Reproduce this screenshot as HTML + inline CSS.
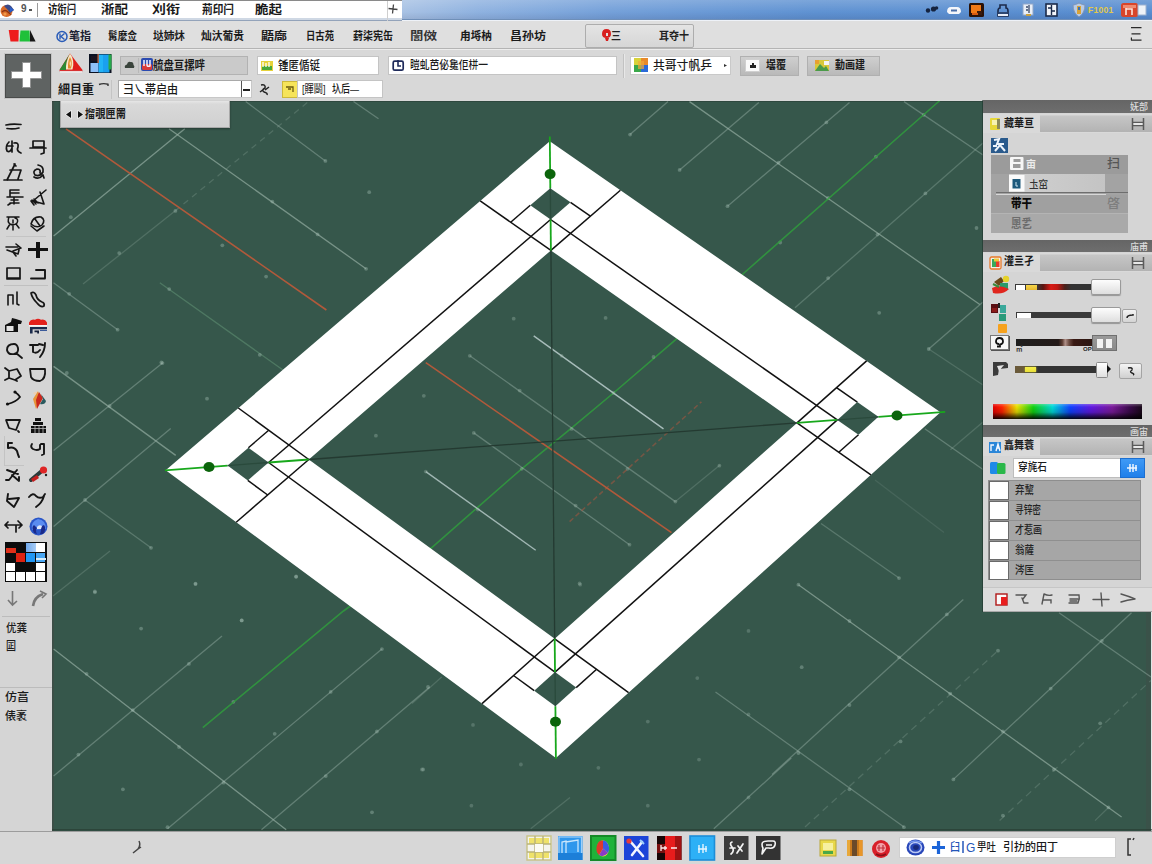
<!DOCTYPE html><html><head><meta charset="utf-8"><title>CAD</title><style>
html,body{margin:0;padding:0}body{width:1152px;height:864px;position:relative;overflow:hidden;background:#d6d6d6;font-family:"Liberation Sans","Noto Sans CJK SC",sans-serif}
div,span{position:absolute;box-sizing:border-box;white-space:nowrap}svg{position:absolute;overflow:visible}
</style></head><body>
<svg width="1152" height="864" viewBox="0 0 1152 864" style="position:absolute;left:0;top:0">
<rect x="52" y="100" width="1100" height="731" fill="#36574b"/>
<rect x="52" y="100" width="2" height="731" fill="#3c4f47"/>
<rect x="52" y="100" width="1100" height="1.6" fill="#27382f" fill-opacity=".75"/>
<rect x="1146" y="611" width="5" height="220" fill="#3e4f48" fill-opacity=".55"/>
<rect x="1151" y="611" width="1" height="220" fill="#dfe8e5"/>
<rect x="52" y="829" width="1100" height="1.5" fill="#27382f" fill-opacity=".6"/>
<line x1="53.6" y1="236" x2="184.8" y2="128.7" stroke="#9fb8ad" stroke-opacity="0.62" stroke-width="1.3"/>
<line x1="83" y1="284" x2="175" y2="211" stroke="#9fb8ad" stroke-opacity="0.25" stroke-width="1.3"/>
<line x1="175" y1="211" x2="308" y2="102" stroke="#9fb8ad" stroke-opacity="0.25" stroke-width="1.3" stroke-dasharray="6 5"/>
<line x1="169" y1="128.7" x2="366" y2="268.7" stroke="#9fb8ad" stroke-opacity="0.62" stroke-width="1.3"/>
<line x1="245.7" y1="101.5" x2="325.4" y2="161" stroke="#9fb8ad" stroke-opacity="0.42" stroke-width="1.3"/>
<line x1="353.5" y1="101.5" x2="378.5" y2="118.7" stroke="#9fb8ad" stroke-opacity="0.42" stroke-width="1.3"/>
<line x1="53.5" y1="282.8" x2="117.6" y2="329.7" stroke="#9fb8ad" stroke-opacity="0.42" stroke-width="1.3"/>
<line x1="159.8" y1="282.8" x2="283" y2="370" stroke="#6fa882" stroke-opacity="0.42" stroke-width="1.3"/>
<line x1="60" y1="170" x2="120" y2="253" stroke="#9fb8ad" stroke-opacity="0" stroke-width="1.3"/>
<line x1="689.5" y1="101.6" x2="979.8" y2="304.5" stroke="#9fb8ad" stroke-opacity="0.62" stroke-width="1.3"/>
<line x1="904" y1="101.6" x2="983" y2="155" stroke="#9fb8ad" stroke-opacity="0.42" stroke-width="1.3"/>
<line x1="928.7" y1="349" x2="983" y2="385" stroke="#9fb8ad" stroke-opacity="0.25" stroke-width="1.3"/>
<line x1="630" y1="134.6" x2="668" y2="101.6" stroke="#9fb8ad" stroke-opacity="0.42" stroke-width="1.3"/>
<line x1="679.6" y1="170" x2="758.8" y2="102.6" stroke="#9fb8ad" stroke-opacity="0.42" stroke-width="1.3"/>
<line x1="727.5" y1="206.2" x2="849.5" y2="102.6" stroke="#9fb8ad" stroke-opacity="0.42" stroke-width="1.3"/>
<line x1="795" y1="307.8" x2="983" y2="143" stroke="#9fb8ad" stroke-opacity="0.33" stroke-width="1.3"/>
<line x1="928.7" y1="349" x2="983" y2="302" stroke="#9fb8ad" stroke-opacity="0.42" stroke-width="1.3"/>
<line x1="53.6" y1="366.4" x2="175.7" y2="455.4" stroke="#9fb8ad" stroke-opacity="0.62" stroke-width="1.3"/>
<line x1="85" y1="500" x2="151" y2="547.8" stroke="#9fb8ad" stroke-opacity="0.35" stroke-width="1.3"/>
<line x1="53.6" y1="450.5" x2="162.5" y2="363" stroke="#9fb8ad" stroke-opacity="0.42" stroke-width="1.3"/>
<line x1="53.6" y1="526.4" x2="170.7" y2="428.4" stroke="#9fb8ad" stroke-opacity="0.42" stroke-width="1.3"/>
<line x1="53.6" y1="649" x2="286.2" y2="829.8" stroke="#9fb8ad" stroke-opacity="0.62" stroke-width="1.3"/>
<line x1="53.6" y1="776" x2="222" y2="635.9" stroke="#9fb8ad" stroke-opacity="0.42" stroke-width="1.3"/>
<line x1="167.5" y1="828.8" x2="381.9" y2="649" stroke="#9fb8ad" stroke-opacity="0.42" stroke-width="1.3"/>
<line x1="261.5" y1="829.8" x2="429.7" y2="687" stroke="#9fb8ad" stroke-opacity="0.42" stroke-width="1.3"/>
<line x1="53" y1="596" x2="110" y2="551" stroke="#9fb8ad" stroke-opacity="0.25" stroke-width="1.3"/>
<line x1="200" y1="700" x2="300" y2="625" stroke="#9fb8ad" stroke-opacity="0" stroke-width="1.3"/>
<line x1="715.5" y1="692" x2="904" y2="827" stroke="#9fb8ad" stroke-opacity="0.42" stroke-width="1.3"/>
<line x1="713.8" y1="828.8" x2="791.3" y2="758" stroke="#9fb8ad" stroke-opacity="0.42" stroke-width="1.3"/>
<line x1="530.7" y1="828.8" x2="570" y2="797.5" stroke="#9fb8ad" stroke-opacity="0.25" stroke-width="1.3"/>
<line x1="412" y1="703.5" x2="441.7" y2="677" stroke="#9fb8ad" stroke-opacity="0.25" stroke-width="1.3"/>
<line x1="798.4" y1="584.7" x2="1121.6" y2="817" stroke="#9fb8ad" stroke-opacity="0.62" stroke-width="1.3"/>
<line x1="821" y1="523.5" x2="899" y2="578" stroke="#9fb8ad" stroke-opacity="0.35" stroke-width="1.3"/>
<line x1="924.8" y1="428.7" x2="983" y2="469.5" stroke="#9fb8ad" stroke-opacity="0.42" stroke-width="1.3"/>
<line x1="950.4" y1="449.8" x2="983" y2="422" stroke="#9fb8ad" stroke-opacity="0.25" stroke-width="1.3"/>
<line x1="875" y1="480" x2="944" y2="532.5" stroke="#9fb8ad" stroke-opacity="0.15" stroke-width="1.3"/>
<line x1="1059" y1="612.8" x2="1151" y2="677" stroke="#9fb8ad" stroke-opacity="0.42" stroke-width="1.3"/>
<line x1="772" y1="774.4" x2="963.3" y2="599.6" stroke="#9fb8ad" stroke-opacity="0.42" stroke-width="1.3"/>
<line x1="805" y1="827" x2="998" y2="650.7" stroke="#9fb8ad" stroke-opacity="0.25" stroke-width="1.3" stroke-dasharray="7 5"/>
<line x1="953.4" y1="779.4" x2="1131.5" y2="612.8" stroke="#9fb8ad" stroke-opacity="0.42" stroke-width="1.3"/>
<line x1="999.6" y1="820.6" x2="1151" y2="680.4" stroke="#9fb8ad" stroke-opacity="0.25" stroke-width="1.3" stroke-dasharray="7 5"/>
<line x1="1095" y1="820.6" x2="1109" y2="807" stroke="#9fb8ad" stroke-opacity="0.25" stroke-width="1.3"/>
<line x1="791.3" y1="744.7" x2="960" y2="864" stroke="#9fb8ad" stroke-opacity="0" stroke-width="1.3"/>
<line x1="975" y1="380" x2="1152" y2="505" stroke="#9fb8ad" stroke-opacity="0" stroke-width="1.3"/>
<circle cx="325.4" cy="160.9" r="1.9" fill="#a9c2b7" fill-opacity="0.38"/>
<circle cx="272.3" cy="201.6" r="1.9" fill="#a9c2b7" fill-opacity="0.38"/>
<circle cx="317.6" cy="234.4" r="1.9" fill="#a9c2b7" fill-opacity="0.38"/>
<circle cx="366.1" cy="268.8" r="1.9" fill="#a9c2b7" fill-opacity="0.38"/>
<circle cx="175.4" cy="210.9" r="1.9" fill="#a9c2b7" fill-opacity="0.38"/>
<circle cx="222.3" cy="245.3" r="1.9" fill="#a9c2b7" fill-opacity="0.38"/>
<circle cx="266.1" cy="276.6" r="1.9" fill="#a9c2b7" fill-opacity="0.38"/>
<circle cx="119.2" cy="253.1" r="1.9" fill="#a9c2b7" fill-opacity="0.38"/>
<circle cx="169.2" cy="289.1" r="1.9" fill="#a9c2b7" fill-opacity="0.38"/>
<circle cx="69.2" cy="293.8" r="1.9" fill="#a9c2b7" fill-opacity="0.38"/>
<circle cx="117.6" cy="329.7" r="1.9" fill="#a9c2b7" fill-opacity="0.38"/>
<circle cx="70.8" cy="217.2" r="1.9" fill="#a9c2b7" fill-opacity="0.38"/>
<circle cx="161.4" cy="362.5" r="1.9" fill="#a9c2b7" fill-opacity="0.38"/>
<circle cx="369.2" cy="192.2" r="1.9" fill="#a9c2b7" fill-opacity="0.38"/>
<circle cx="630.1" cy="134.6" r="1.9" fill="#a9c2b7" fill-opacity="0.38"/>
<circle cx="679.6" cy="169.9" r="1.9" fill="#a9c2b7" fill-opacity="0.38"/>
<circle cx="727.5" cy="206.2" r="1.9" fill="#a9c2b7" fill-opacity="0.38"/>
<circle cx="778.6" cy="162.7" r="1.9" fill="#a9c2b7" fill-opacity="0.38"/>
<circle cx="828.1" cy="198.0" r="1.9" fill="#a9c2b7" fill-opacity="0.38"/>
<circle cx="877.5" cy="234.6" r="1.9" fill="#a9c2b7" fill-opacity="0.38"/>
<circle cx="826.4" cy="122.4" r="1.9" fill="#a9c2b7" fill-opacity="0.38"/>
<circle cx="875.9" cy="156.7" r="1.9" fill="#a9c2b7" fill-opacity="0.38"/>
<circle cx="923.7" cy="114.8" r="1.9" fill="#a9c2b7" fill-opacity="0.38"/>
<circle cx="925.4" cy="193.4" r="1.9" fill="#a9c2b7" fill-opacity="0.38"/>
<circle cx="828.1" cy="278.1" r="1.9" fill="#a9c2b7" fill-opacity="0.38"/>
<circle cx="780.2" cy="242.5" r="1.9" fill="#a9c2b7" fill-opacity="0.38"/>
<circle cx="879.2" cy="312.8" r="1.9" fill="#a9c2b7" fill-opacity="0.38"/>
<circle cx="928.7" cy="349.0" r="1.9" fill="#a9c2b7" fill-opacity="0.38"/>
<circle cx="976.5" cy="228.0" r="1.9" fill="#a9c2b7" fill-opacity="0.38"/>
<circle cx="162.5" cy="363.1" r="1.9" fill="#a9c2b7" fill-opacity="0.38"/>
<circle cx="109.7" cy="406.0" r="1.9" fill="#a9c2b7" fill-opacity="0.38"/>
<circle cx="66.8" cy="373.0" r="1.9" fill="#a9c2b7" fill-opacity="0.38"/>
<circle cx="85.0" cy="500.0" r="1.9" fill="#a9c2b7" fill-opacity="0.38"/>
<circle cx="151.0" cy="547.8" r="1.9" fill="#a9c2b7" fill-opacity="0.38"/>
<circle cx="94.9" cy="592.3" r="1.9" fill="#a9c2b7" fill-opacity="0.38"/>
<circle cx="195.5" cy="584.1" r="1.9" fill="#a9c2b7" fill-opacity="0.38"/>
<circle cx="241.7" cy="620.4" r="1.9" fill="#a9c2b7" fill-opacity="0.38"/>
<circle cx="296.1" cy="576.8" r="1.9" fill="#a9c2b7" fill-opacity="0.38"/>
<circle cx="259.8" cy="354.8" r="1.9" fill="#a9c2b7" fill-opacity="0.38"/>
<circle cx="207.0" cy="398.7" r="1.9" fill="#a9c2b7" fill-opacity="0.38"/>
<circle cx="94.9" cy="591.3" r="1.9" fill="#a9c2b7" fill-opacity="0.38"/>
<circle cx="195.5" cy="583.7" r="1.9" fill="#a9c2b7" fill-opacity="0.38"/>
<circle cx="241.7" cy="620.4" r="1.9" fill="#a9c2b7" fill-opacity="0.38"/>
<circle cx="141.1" cy="628.6" r="1.9" fill="#a9c2b7" fill-opacity="0.38"/>
<circle cx="188.9" cy="663.9" r="1.9" fill="#a9c2b7" fill-opacity="0.38"/>
<circle cx="86.6" cy="673.8" r="1.9" fill="#a9c2b7" fill-opacity="0.38"/>
<circle cx="132.8" cy="710.1" r="1.9" fill="#a9c2b7" fill-opacity="0.38"/>
<circle cx="233.4" cy="701.8" r="1.9" fill="#a9c2b7" fill-opacity="0.38"/>
<circle cx="179.0" cy="747.0" r="1.9" fill="#a9c2b7" fill-opacity="0.38"/>
<circle cx="78.4" cy="754.6" r="1.9" fill="#a9c2b7" fill-opacity="0.38"/>
<circle cx="223.5" cy="782.7" r="1.9" fill="#a9c2b7" fill-opacity="0.38"/>
<circle cx="274.7" cy="733.8" r="1.9" fill="#a9c2b7" fill-opacity="0.38"/>
<circle cx="330.7" cy="691.9" r="1.9" fill="#a9c2b7" fill-opacity="0.38"/>
<circle cx="381.9" cy="649.1" r="1.9" fill="#a9c2b7" fill-opacity="0.38"/>
<circle cx="376.9" cy="731.5" r="1.9" fill="#a9c2b7" fill-opacity="0.38"/>
<circle cx="325.8" cy="776.1" r="1.9" fill="#a9c2b7" fill-opacity="0.38"/>
<circle cx="122.9" cy="789.3" r="1.9" fill="#a9c2b7" fill-opacity="0.38"/>
<circle cx="167.5" cy="827.2" r="1.9" fill="#a9c2b7" fill-opacity="0.38"/>
<circle cx="296.1" cy="576.5" r="1.9" fill="#a9c2b7" fill-opacity="0.38"/>
<circle cx="428.0" cy="687.0" r="1.9" fill="#a9c2b7" fill-opacity="0.38"/>
<circle cx="372.0" cy="812.3" r="1.9" fill="#a9c2b7" fill-opacity="0.38"/>
<circle cx="423.1" cy="769.5" r="1.9" fill="#a9c2b7" fill-opacity="0.38"/>
<circle cx="580.2" cy="584.7" r="1.9" fill="#a9c2b7" fill-opacity="0.28"/>
<circle cx="697.3" cy="678.1" r="1.9" fill="#a9c2b7" fill-opacity="0.28"/>
<circle cx="748.5" cy="630.9" r="1.9" fill="#a9c2b7" fill-opacity="0.28"/>
<circle cx="748.5" cy="714.4" r="1.9" fill="#a9c2b7" fill-opacity="0.28"/>
<circle cx="647.8" cy="721.6" r="1.9" fill="#a9c2b7" fill-opacity="0.28"/>
<circle cx="699.0" cy="759.6" r="1.9" fill="#a9c2b7" fill-opacity="0.28"/>
<circle cx="598.4" cy="767.8" r="1.9" fill="#a9c2b7" fill-opacity="0.28"/>
<circle cx="520.9" cy="764.5" r="1.9" fill="#a9c2b7" fill-opacity="0.28"/>
<circle cx="421.9" cy="769.5" r="1.9" fill="#a9c2b7" fill-opacity="0.28"/>
<circle cx="471.4" cy="805.7" r="1.9" fill="#a9c2b7" fill-opacity="0.28"/>
<circle cx="647.8" cy="805.7" r="1.9" fill="#a9c2b7" fill-opacity="0.28"/>
<circle cx="748.5" cy="797.5" r="1.9" fill="#a9c2b7" fill-opacity="0.28"/>
<circle cx="473.0" cy="724.9" r="1.9" fill="#a9c2b7" fill-opacity="0.28"/>
<circle cx="798.4" cy="584.7" r="1.9" fill="#a9c2b7" fill-opacity="0.38"/>
<circle cx="899.0" cy="578.1" r="1.9" fill="#a9c2b7" fill-opacity="0.38"/>
<circle cx="849.5" cy="621.0" r="1.9" fill="#a9c2b7" fill-opacity="0.38"/>
<circle cx="946.8" cy="614.4" r="1.9" fill="#a9c2b7" fill-opacity="0.38"/>
<circle cx="899.0" cy="657.3" r="1.9" fill="#a9c2b7" fill-opacity="0.38"/>
<circle cx="998.0" cy="650.7" r="1.9" fill="#a9c2b7" fill-opacity="0.38"/>
<circle cx="801.7" cy="667.2" r="1.9" fill="#a9c2b7" fill-opacity="0.38"/>
<circle cx="950.1" cy="693.6" r="1.9" fill="#a9c2b7" fill-opacity="0.38"/>
<circle cx="849.5" cy="705.1" r="1.9" fill="#a9c2b7" fill-opacity="0.38"/>
<circle cx="1050.7" cy="688.6" r="1.9" fill="#a9c2b7" fill-opacity="0.38"/>
<circle cx="1002.9" cy="731.5" r="1.9" fill="#a9c2b7" fill-opacity="0.38"/>
<circle cx="900.6" cy="741.4" r="1.9" fill="#a9c2b7" fill-opacity="0.38"/>
<circle cx="1101.9" cy="640.8" r="1.9" fill="#a9c2b7" fill-opacity="0.38"/>
<circle cx="1100.2" cy="723.3" r="1.9" fill="#a9c2b7" fill-opacity="0.38"/>
<circle cx="798.4" cy="753.0" r="1.9" fill="#a9c2b7" fill-opacity="0.38"/>
<circle cx="1054.0" cy="769.5" r="1.9" fill="#a9c2b7" fill-opacity="0.38"/>
<circle cx="953.4" cy="779.4" r="1.9" fill="#a9c2b7" fill-opacity="0.38"/>
<circle cx="849.5" cy="789.3" r="1.9" fill="#a9c2b7" fill-opacity="0.38"/>
<circle cx="1108.5" cy="807.4" r="1.9" fill="#a9c2b7" fill-opacity="0.38"/>
<circle cx="1002.9" cy="815.6" r="1.9" fill="#a9c2b7" fill-opacity="0.38"/>
<circle cx="903.9" cy="827.2" r="1.9" fill="#a9c2b7" fill-opacity="0.38"/>
<line x1="66" y1="128.8" x2="326.4" y2="310" stroke="#b85a3a" stroke-opacity="0.95" stroke-width="1.6"/>
<polyline points="983,62 937,103 744,273 675.4,339.9 613.5,393 569.6,429.7 521.7,468.8 431.8,547.5 343.5,611 202.8,727.6" fill="none" stroke="#2fa03c" stroke-opacity="0.8" stroke-width="1.6"/>
<path d="M549.8,141.3 940.5,412.2 555.9,758.1 165.7,470.2Z M550.9,250.4 797.0,422.9 554.7,638.8 308.8,459.5Z" fill="#ffffff" fill-rule="evenodd"/>
<clipPath id="hole"><polygon points="550.9,250.4 797.0,422.9 554.7,638.8 308.8,459.5"/></clipPath>
<g clip-path="url(#hole)">
<line x1="533.7" y1="335.9" x2="663.5" y2="428.9" stroke="#c4d6d6" stroke-opacity="0.8" stroke-width="1.4"/>
<line x1="469.8" y1="355.8" x2="675.4" y2="501.6" stroke="#9fb8ad" stroke-opacity="0.42" stroke-width="1.3"/>
<line x1="425.8" y1="471.6" x2="535.7" y2="550.3" stroke="#c4d6d6" stroke-opacity="0.75" stroke-width="1.4"/>
<line x1="473.8" y1="432.9" x2="629.5" y2="544.7" stroke="#9fb8ad" stroke-opacity="0.42" stroke-width="1.3"/>
<line x1="569.6" y1="521.6" x2="701.4" y2="401.8" stroke="#a8553f" stroke-opacity="0.55" stroke-width="1.6" stroke-dasharray="5 3"/>
<line x1="675.4" y1="501.6" x2="720" y2="465" stroke="#9fb8ad" stroke-opacity="0.25" stroke-width="1.3"/>
<line x1="425.8" y1="362.6" x2="671.5" y2="532.7" stroke="#b85a3a" stroke-opacity="0.95" stroke-width="1.6"/>
<circle cx="513.7" cy="318.7" r="1.9" fill="#a9c2b7" fill-opacity="0.33"/>
<circle cx="469.8" cy="355.8" r="1.9" fill="#a9c2b7" fill-opacity="0.33"/>
<circle cx="561.6" cy="355.8" r="1.9" fill="#a9c2b7" fill-opacity="0.33"/>
<circle cx="423.8" cy="395.8" r="1.9" fill="#a9c2b7" fill-opacity="0.33"/>
<circle cx="519.7" cy="390.6" r="1.9" fill="#a9c2b7" fill-opacity="0.33"/>
<circle cx="613.5" cy="393.0" r="1.9" fill="#a9c2b7" fill-opacity="0.33"/>
<circle cx="375.9" cy="435.7" r="1.9" fill="#a9c2b7" fill-opacity="0.33"/>
<circle cx="473.8" cy="432.9" r="1.9" fill="#a9c2b7" fill-opacity="0.33"/>
<circle cx="571.6" cy="428.9" r="1.9" fill="#a9c2b7" fill-opacity="0.33"/>
<circle cx="425.8" cy="471.6" r="1.9" fill="#a9c2b7" fill-opacity="0.33"/>
<circle cx="521.7" cy="468.8" r="1.9" fill="#a9c2b7" fill-opacity="0.33"/>
<circle cx="627.5" cy="468.8" r="1.9" fill="#a9c2b7" fill-opacity="0.33"/>
<circle cx="477.8" cy="509.6" r="1.9" fill="#a9c2b7" fill-opacity="0.33"/>
<circle cx="575.6" cy="505.6" r="1.9" fill="#a9c2b7" fill-opacity="0.33"/>
<circle cx="675.4" cy="501.6" r="1.9" fill="#a9c2b7" fill-opacity="0.33"/>
<circle cx="719.4" cy="465.7" r="1.9" fill="#a9c2b7" fill-opacity="0.33"/>
<circle cx="629.5" cy="544.7" r="1.9" fill="#a9c2b7" fill-opacity="0.33"/>
<circle cx="579.6" cy="583.5" r="1.9" fill="#a9c2b7" fill-opacity="0.33"/>
<circle cx="653.5" cy="357.0" r="1.9" fill="#a9c2b7" fill-opacity="0.33"/>
<circle cx="605.6" cy="317.9" r="1.9" fill="#a9c2b7" fill-opacity="0.33"/>
</g>
<line x1="550.9" y1="250.4" x2="554.7" y2="638.8" stroke="#243a31" stroke-width="1.3"/>
<line x1="308.8" y1="459.5" x2="797.0" y2="422.9" stroke="#243a31" stroke-width="1.3"/>
<line x1="550.6" y1="219.5" x2="837.3" y2="419.9" stroke="#111" stroke-width="1.5"/>
<line x1="837.3" y1="419.9" x2="555.0" y2="672.1" stroke="#111" stroke-width="1.5"/>
<line x1="555.0" y1="672.1" x2="268.6" y2="462.5" stroke="#111" stroke-width="1.5"/>
<line x1="268.6" y1="462.5" x2="550.6" y2="219.5" stroke="#111" stroke-width="1.5"/>
<line x1="620.4" y1="190.3" x2="550.9" y2="250.4" stroke="#111" stroke-width="1.5"/>
<line x1="480.2" y1="200.9" x2="550.9" y2="250.4" stroke="#111" stroke-width="1.5"/>
<line x1="530.3" y1="205.3" x2="510.7" y2="222.2" stroke="#111" stroke-width="1.5"/>
<line x1="570.5" y1="202.3" x2="590.4" y2="216.2" stroke="#111" stroke-width="1.5"/>
<polygon points="550.3,188.2 570.5,202.3 550.6,219.5 530.3,205.3" fill="#36574b"/>
<line x1="549.8" y1="136.6" x2="550.3" y2="188.2" stroke="#18a81c" stroke-width="1.8"/>
<line x1="550.6" y1="219.5" x2="550.9" y2="250.4" stroke="#18a81c" stroke-width="1.8"/>
<line x1="550.3" y1="188.2" x2="550.6" y2="219.5" stroke="#2a4a3c" stroke-width="1.3"/>
<ellipse cx="550.1" cy="174.1" rx="5.5" ry="5" fill="#0b640b"/>
<line x1="866.6" y1="360.9" x2="797.0" y2="422.9" stroke="#111" stroke-width="1.5"/>
<line x1="870.9" y1="474.8" x2="797.0" y2="422.9" stroke="#111" stroke-width="1.5"/>
<line x1="858.5" y1="434.7" x2="838.8" y2="452.3" stroke="#111" stroke-width="1.5"/>
<line x1="857.3" y1="402.1" x2="836.5" y2="387.7" stroke="#111" stroke-width="1.5"/>
<polygon points="878.4,416.8 857.3,402.1 837.3,419.9 858.5,434.7" fill="#36574b"/>
<line x1="945.2" y1="411.9" x2="878.4" y2="416.8" stroke="#18a81c" stroke-width="1.8"/>
<line x1="837.3" y1="419.9" x2="797.0" y2="422.9" stroke="#18a81c" stroke-width="1.8"/>
<line x1="878.4" y1="416.8" x2="837.3" y2="419.9" stroke="#2a4a3c" stroke-width="1.3"/>
<ellipse cx="897.0" cy="415.5" rx="5.5" ry="5" fill="#0b640b"/>
<line x1="482.0" y1="703.6" x2="554.7" y2="638.8" stroke="#111" stroke-width="1.5"/>
<line x1="628.6" y1="692.7" x2="554.7" y2="638.8" stroke="#111" stroke-width="1.5"/>
<line x1="576.2" y1="687.6" x2="596.6" y2="669.3" stroke="#111" stroke-width="1.5"/>
<line x1="534.2" y1="690.7" x2="513.5" y2="675.5" stroke="#111" stroke-width="1.5"/>
<polygon points="555.4,706.2 534.2,690.7 555.0,672.1 576.2,687.6" fill="#36574b"/>
<line x1="555.9" y1="758.8" x2="555.4" y2="706.2" stroke="#18a81c" stroke-width="1.8"/>
<line x1="555.0" y1="672.1" x2="554.7" y2="638.8" stroke="#18a81c" stroke-width="1.8"/>
<line x1="555.4" y1="706.2" x2="555.0" y2="672.1" stroke="#2a4a3c" stroke-width="1.3"/>
<ellipse cx="555.5" cy="721.7" rx="5.5" ry="5" fill="#0b640b"/>
<line x1="236.2" y1="522.2" x2="308.8" y2="459.5" stroke="#111" stroke-width="1.5"/>
<line x1="238.3" y1="408.0" x2="308.8" y2="459.5" stroke="#111" stroke-width="1.5"/>
<line x1="248.4" y1="447.7" x2="268.7" y2="430.2" stroke="#111" stroke-width="1.5"/>
<line x1="247.8" y1="480.4" x2="267.7" y2="495.0" stroke="#111" stroke-width="1.5"/>
<polygon points="227.6,465.6 247.8,480.4 268.6,462.5 248.4,447.7" fill="#36574b"/>
<line x1="164.9" y1="470.3" x2="227.6" y2="465.6" stroke="#18a81c" stroke-width="1.8"/>
<line x1="268.6" y1="462.5" x2="308.8" y2="459.5" stroke="#18a81c" stroke-width="1.8"/>
<line x1="227.6" y1="465.6" x2="268.6" y2="462.5" stroke="#2a4a3c" stroke-width="1.3"/>
<ellipse cx="209.0" cy="467.0" rx="5.5" ry="5" fill="#0b640b"/>
</svg>
<div style="left:0px;top:0px;width:1152px;height:21px;background:#e9eef5"></div>
<div style="left:0px;top:0px;width:402px;height:19px;background:#fff;border-top:1px solid #8a8a8a"></div>
<div style="left:402px;top:0px;width:750px;height:20px;background:linear-gradient(90deg,#a8c2e4 0,#8fb2e0 10%,#74a0d9 28%,#5f92d2 55%,#588dd0 100%)"></div>
<div style="left:402px;top:0px;width:750px;height:20px;background:linear-gradient(180deg,rgba(255,255,255,.18),rgba(255,255,255,0) 60%,rgba(0,0,40,.10))"></div>
<div style="left:0px;top:18px;width:402px;height:1.5px;background:#cfd8e4"></div>
<div style="left:0px;top:19.5px;width:402px;height:1.5px;background:#93a3ba"></div>
<div style="left:402px;top:19px;width:750px;height:1px;background:#6f8fb8"></div>
<div style="left:402px;top:20px;width:750px;height:1px;background:#eef2f8"></div>
<div style="left:387px;top:1px;width:1px;height:20px;background:#cfcfcf"></div>
<div style="left:0px;top:21px;width:1152px;height:28px;background:#dfdfdf"></div>
<div style="left:0px;top:48px;width:1152px;height:1px;background:#b4b4b4"></div>
<div style="left:0px;top:49px;width:1152px;height:1px;background:#ececec"></div>
<div style="left:0px;top:50px;width:1152px;height:51px;background:#d8d8d8"></div>
<div style="left:0px;top:100px;width:52px;height:731px;background:#d5d5d5"></div>
<div style="left:0px;top:830.5px;width:1152px;height:34px;background:#d7d7d7;border-top:1px solid #9c9c9c"></div>
<svg style="left:0px;top:3px" width="15" height="15" viewBox="0 0 15 15"><circle cx="6.5" cy="8" r="6" fill="#d86a28"/><path d="M4 3 Q8 0 11 3 L14 7 L10 10 L7 6Z" fill="#3a4a8a"/><path d="M10 4 L14 7 L10 9Z" fill="#2a5ec8"/><path d="M2 9 Q5 6 8 9 T11 11" stroke="#8a3414" stroke-width="1.3" fill="none"/><circle cx="5" cy="11" r="1.6" fill="#f09a4a"/></svg>
<span style="left:21px;top:2.3px;height:14px;line-height:14px;font-size:10px;color:#555;font-weight:700;">9</span>
<div style="left:28.5px;top:9px;width:3px;height:1.6px;background:#555"></div>
<div style="left:37px;top:3px;width:1px;height:14px;background:#9a9a9a"></div>
<span style="left:48px;top:2.4px;height:16px;line-height:16px;font-size:12px;color:#1a1a1a;font-weight:700;transform:scaleX(0.778);transform-origin:0 50%;">访衔闩</span>
<span style="left:101px;top:2.4px;height:16px;line-height:16px;font-size:12px;color:#1a1a1a;font-weight:700;transform:scaleX(1.125);transform-origin:0 50%;">淅配</span>
<span style="left:152px;top:2.4px;height:16px;line-height:16px;font-size:12px;color:#1a1a1a;font-weight:700;transform:scaleX(1.167);transform-origin:0 50%;">刈衔</span>
<span style="left:202px;top:2.4px;height:16px;line-height:16px;font-size:12px;color:#1a1a1a;font-weight:700;transform:scaleX(0.889);transform-origin:0 50%;">荊印闩</span>
<span style="left:255px;top:2.4px;height:16px;line-height:16px;font-size:12px;color:#1a1a1a;font-weight:700;transform:scaleX(1.125);transform-origin:0 50%;">脆起</span>
<svg style="left:387px;top:3px" width="13" height="13" viewBox="0 0 13 13"><path d="M1.5 5.5 L10.5 6.5 M6.5 1.5 L5.5 10.5" stroke="#444" stroke-width="1.3" fill="none"/></svg>
<svg style="left:924px;top:4px" width="16" height="12" viewBox="0 0 16 12"><circle cx="4" cy="6.5" r="2.2" fill="#15233f"/><circle cx="9.5" cy="5" r="2.6" fill="#15233f"/><circle cx="12.5" cy="4" r="1.8" fill="#15233f"/></svg>
<svg style="left:946px;top:4px" width="16" height="12" viewBox="0 0 16 12"><path d="M1 8 Q1 3 5 3 L11 3 Q15 3 15 8 L13 10 L3 10 Z" fill="#f4f6fa"/><rect x="5" y="5.5" width="6" height="2" fill="#4a6ea8"/></svg>
<svg style="left:969px;top:3px" width="15" height="14" viewBox="0 0 15 14"><rect x="0" y="0" width="15" height="14" rx="1.5" fill="#2a1208"/><rect x="2" y="2" width="10" height="8" fill="#f07a18"/><rect x="8" y="8" width="5" height="4" fill="#3a1a0c"/><rect x="3" y="10" width="6" height="2" fill="#d85a10"/></svg>
<svg style="left:996px;top:3px" width="14" height="14" viewBox="0 0 14 14"><path d="M2 13 L2 8 Q2 5 4 5 L4 2 L10 2 L10 5 Q12 5 12 8 L12 13 Z" fill="none" stroke="#1c2a4a" stroke-width="1.6"/><path d="M3 10 H11" stroke="#1c2a4a" stroke-width="1.4"/><rect x="2" y="11" width="10" height="2" fill="#e8eef8"/></svg>
<svg style="left:1022px;top:3px" width="13" height="14" viewBox="0 0 13 14"><rect x="1" y="1" width="10" height="11" fill="#e9eef6" stroke="#8fa6c8" stroke-width="1"/><path d="M7 2 V10 M4 4 H6 M4 7 H6" stroke="#3a4a6a" stroke-width="1.3"/><rect x="4" y="11" width="5" height="2" fill="#c8a040"/></svg>
<svg style="left:1045px;top:3px" width="13" height="14" viewBox="0 0 13 14"><rect x="1" y="1" width="11" height="12" fill="#f2f5fa" stroke="#1a2a4a" stroke-width="1.6"/><path d="M6.5 2 V12 M3 5 H6 M7 8 H10" stroke="#1a2a4a" stroke-width="1.4"/></svg>
<svg style="left:1071px;top:2px" width="16" height="16" viewBox="0 0 16 16"><path d="M8 1 Q12 3 14 3 Q14 11 8 15 Q2 11 2 3 Q4 3 8 1 Z" fill="#b9cbe4" stroke="#7d95b8" stroke-width="1"/><rect x="6" y="4" width="4" height="8" fill="#d9a338"/><rect x="7" y="5" width="2" height="3" fill="#3a6fb0"/></svg>
<span style="left:1088px;top:3.8px;height:12.5px;line-height:12.5px;font-size:8.5px;color:#e2c84a;font-weight:700;letter-spacing:0.3px">F1001</span>
<svg style="left:1120px;top:2px" width="28" height="16" viewBox="0 0 28 16"><rect x="1" y="1" width="17" height="14" rx="2.5" fill="#d8452a"/><rect x="3" y="3" width="13" height="3" fill="#f08a70"/><path d="M6 6 V13 M6 7 H12 V13" stroke="#fbe4dc" stroke-width="1.6" fill="none"/><rect x="18" y="3" width="8" height="10" fill="#eef2f8" stroke="#9db2d0" stroke-width="1"/></svg>
<svg style="left:8px;top:29px" width="30" height="14" viewBox="0 0 30 14"><path d="M0.7 1 L10.7 1 L10.5 12.5 L2.5 12.5 Z" fill="#ee1c1c"/><path d="M12.5 1.5 L21.5 1.5 L22 12.5 L11.5 12.5 Z" fill="#1fc03a"/><path d="M22 1 L27.6 12.5 L22 12.5 Z" fill="#161616"/></svg>
<svg style="left:56px;top:30px" width="12" height="13" viewBox="0 0 12 13"><circle cx="6" cy="6.5" r="5" fill="none" stroke="#2a5cb8" stroke-width="1.5"/><path d="M4 3.5 V9.5 M8.5 3.5 L5 6.5 L8.5 9.5" stroke="#2a5cb8" stroke-width="1.4" fill="none"/></svg>
<span style="left:69px;top:29.0px;height:15px;line-height:15px;font-size:11px;color:#1a2030;font-weight:700;transform:scaleX(1.000);transform-origin:0 50%;">笔指</span>
<span style="left:108px;top:29.0px;height:15px;line-height:15px;font-size:11px;color:#1a1a1a;font-weight:700;transform:scaleX(0.879);transform-origin:0 50%;">髯麽佥</span>
<span style="left:153px;top:29.0px;height:15px;line-height:15px;font-size:11px;color:#1a1a1a;font-weight:700;transform:scaleX(0.970);transform-origin:0 50%;">垯姉炑</span>
<span style="left:201px;top:29.0px;height:15px;line-height:15px;font-size:11px;color:#1a1a1a;font-weight:700;transform:scaleX(0.977);transform-origin:0 50%;">灿汏葡贵</span>
<span style="left:261px;top:29.0px;height:15px;line-height:15px;font-size:11px;color:#1a1a1a;font-weight:700;transform:scaleX(1.182);transform-origin:0 50%;">鼯廍</span>
<span style="left:306px;top:29.0px;height:15px;line-height:15px;font-size:11px;color:#1a1a1a;font-weight:700;transform:scaleX(0.848);transform-origin:0 50%;">日古苑</span>
<span style="left:353px;top:29.0px;height:15px;line-height:15px;font-size:11px;color:#1a1a1a;font-weight:700;transform:scaleX(0.909);transform-origin:0 50%;">葑柒宪缶</span>
<span style="left:410px;top:29.0px;height:15px;line-height:15px;font-size:11px;color:#333;font-weight:700;transform:scaleX(1.227);transform-origin:0 50%;">誾傚</span>
<span style="left:460px;top:29.0px;height:15px;line-height:15px;font-size:11px;color:#1a1a1a;font-weight:700;transform:scaleX(0.970);transform-origin:0 50%;">甪埓枘</span>
<span style="left:510px;top:29.0px;height:15px;line-height:15px;font-size:11px;color:#1a1a1a;font-weight:700;transform:scaleX(1.091);transform-origin:0 50%;">昌孙坊</span>
<div style="left:585px;top:24px;width:109px;height:24px;background:linear-gradient(#e4e4e4,#d6d6d6);border:1px solid #adadad;border-radius:2px"></div>
<svg style="left:601px;top:28px" width="11" height="14" viewBox="0 0 11 14"><path d="M5.5 1 Q10 1 10 6 Q10 10 5.5 10 Q1 10 1 6 Q1 1 5.5 1Z M5 5 L7 5 L7 8 L5 8Z" fill="#d81e1e" fill-rule="evenodd"/><path d="M4 10 L8 10 L7 13 L5 13Z" fill="#d81e1e"/></svg>
<span style="left:611px;top:29.0px;height:15px;line-height:15px;font-size:11px;color:#222;font-weight:700;transform:scaleX(0.909);transform-origin:0 50%;">三</span>
<span style="left:659px;top:29.0px;height:15px;line-height:15px;font-size:11px;color:#222;font-weight:700;transform:scaleX(0.909);transform-origin:0 50%;">耳夺十</span>
<svg style="left:1129px;top:26px" width="14" height="17" viewBox="0 0 14 17"><path d="M2 1.7 H12.5 M2.5 7.8 H11.5 M2 14.2 H12.5 M2.4 11.5 V14.2" stroke="#2a2a2a" stroke-width="1.2" fill="none"/></svg>
<div style="left:5px;top:54px;width:45.5px;height:44px;background:#5f6362;border:1px solid #4a4c4b;box-shadow:0 0 0 1px #c4c4c4"></div>
<div style="left:12.4px;top:72.2px;width:28.2px;height:6.2px;background:#fff;box-shadow:0 0 0 1px rgba(190,190,190,.55)"></div>
<div style="left:22.6px;top:63.2px;width:7px;height:24.3px;background:#fff;box-shadow:0 0 0 1px rgba(190,190,190,.55)"></div>
<div style="left:13px;top:72.2px;width:27px;height:6.2px;background:#fff"></div>
<svg style="left:58px;top:52px" width="26" height="22" viewBox="0 0 26 22"><path d="M12 1.5 L24.5 18 L1.5 18 Z" fill="#e01e1a"/><path d="M12 1.5 L9 8 L8 18 L1.5 18 Z" fill="#2c8a34"/><path d="M12 1.5 Q17 8 14.5 17.5 L8 17.5 Q7.5 10 12 1.5Z" fill="#f3e9c8"/><path d="M12 5 Q15 10 13 16.5 L10 16.5 Q9.5 10 12 5Z" fill="#e58a2a"/><path d="M12 8 Q13.5 11 12.5 15 Q11 12 12 8Z" fill="#f9f2dc"/><rect x="1.5" y="18" width="23" height="1.3" fill="#d83030"/><rect x="2" y="19.3" width="22" height="1.2" fill="#f4f4f4"/></svg>
<svg style="left:89px;top:54px" width="23" height="19" viewBox="0 0 23 19"><rect x="0" y="0" width="22.5" height="19" fill="#0c1222"/><rect x="1.5" y="9" width="8" height="9" fill="#8ec0f8"/><rect x="2" y="2" width="6" height="5" fill="#1a1420"/><rect x="9.5" y="0.5" width="11" height="18" fill="#1aa0f0"/><rect x="10" y="1" width="4" height="17" fill="#22b4f6"/><rect x="19.5" y="0.5" width="3" height="15" fill="#26a84a"/><rect x="8.5" y="0" width="1.2" height="9" fill="#d86a3a"/></svg>
<div style="left:120px;top:56px;width:128px;height:19px;background:#cacaca;border:1px solid #b2b2b2"></div>
<svg style="left:124px;top:60px" width="11" height="10" viewBox="0 0 11 10"><path d="M1 8 Q0 5 3 4.5 Q3.5 1 6.5 2 Q9.5 1.5 9.5 5 Q11 6 10 8 Z" fill="#3a443c"/></svg>
<div style="left:138px;top:58px;width:1px;height:15px;background:#b8b8b8"></div>
<svg style="left:141px;top:58px" width="13" height="14" viewBox="0 0 13 14"><rect x="0" y="0" width="12" height="13" rx="2" fill="#2a4ab0"/><rect x="1" y="6" width="10" height="6" rx="1.5" fill="#d83a3a"/><path d="M3 2 V8 M6 2 V7 Q6 9 9 8 V2" stroke="#f2f2ff" stroke-width="1.5" fill="none"/></svg>
<span style="left:153px;top:57.5px;height:16px;line-height:16px;font-size:12px;color:#1b1b1b;font-weight:700;transform:scaleX(0.867);transform-origin:0 50%;">艈盘亘摞哶</span>
<div style="left:257px;top:56px;width:122px;height:19px;background:#fff;border:1px solid #c4c4c4"></div>
<svg style="left:261px;top:59px" width="13" height="13" viewBox="0 0 13 13"><rect x="0" y="2" width="12" height="10" fill="#e6d23a"/><rect x="1" y="7" width="10" height="4" fill="#4aa83a"/><path d="M2 3 V8 M5 4 V8 M8 3 V8" stroke="#fff" stroke-width="1.3"/></svg>
<span style="left:278px;top:57.5px;height:16px;line-height:16px;font-size:12px;color:#1b1b1b;font-weight:500;transform:scaleX(0.875);transform-origin:0 50%;">锺匿偱铤</span>
<div style="left:388px;top:56px;width:229px;height:19px;background:#fff;border:1px solid #c4c4c4"></div>
<svg style="left:392px;top:59px" width="13" height="13" viewBox="0 0 13 13"><rect x="1.2" y="2.2" width="10" height="9" rx="1.5" fill="none" stroke="#1e2a5a" stroke-width="1.7"/><path d="M6 1 V7 H9" stroke="#1e2a5a" stroke-width="1.6" fill="none"/></svg>
<span style="left:410px;top:57.8px;height:15.5px;line-height:15.5px;font-size:11.5px;color:#1b1b1b;font-weight:500;transform:scaleX(0.848);transform-origin:0 50%;">䁗虬芭佖毚佢栟一</span>
<div style="left:623px;top:54px;width:1px;height:24px;background:#c2c2c2"></div>
<div style="left:624px;top:54px;width:1px;height:24px;background:#e8e8e8"></div>
<div style="left:630px;top:56px;width:101px;height:19px;background:#fff;border:1px solid #c9c9c9"></div>
<svg style="left:634px;top:58px" width="15" height="15" viewBox="0 0 15 15"><rect x="0" y="0" width="7" height="7" fill="#d8d23a"/><rect x="7" y="0" width="7" height="7" fill="#e88a2a"/><rect x="0" y="7" width="7" height="7" fill="#3aa84a"/><rect x="7" y="7" width="7" height="7" fill="#2a6ad8"/><rect x="4" y="3" width="6" height="8" fill="#f0a83a" opacity=".7"/></svg>
<span style="left:653px;top:57.5px;height:16px;line-height:16px;font-size:12px;color:#1b1b1b;font-weight:500;transform:scaleX(0.983);transform-origin:0 50%;">共哥寸帆乒</span>
<svg style="left:723px;top:63px" width="5" height="5" viewBox="0 0 5 5"><path d="M1 1 L4 2.5 L1 4Z" fill="#333"/></svg>
<div style="left:740px;top:56px;width:59px;height:20px;background:linear-gradient(#cfcfcf,#b9b9b9);border:1px solid #b0b0b0"></div>
<div style="left:745px;top:59px;width:15px;height:13px;background:#fafafa;border:1px solid #d0d0d0"></div>
<svg style="left:749px;top:62px" width="8" height="7" viewBox="0 0 8 7"><path d="M1 6 V3 H3 V1 H5 V3 H7 V6Z" fill="#222"/></svg>
<span style="left:766px;top:57.8px;height:15.5px;line-height:15.5px;font-size:11.5px;color:#1b1b1b;font-weight:700;transform:scaleX(0.870);transform-origin:0 50%;">壜覆</span>
<div style="left:807px;top:56px;width:73px;height:20px;background:linear-gradient(#cfcfcf,#b9b9b9);border:1px solid #b0b0b0"></div>
<svg style="left:815px;top:59px" width="16" height="13" viewBox="0 0 16 13"><rect x="0" y="1" width="14" height="11" fill="#d8c83a"/><path d="M0 12 L5 5 L9 9 L11 7 L14 12Z" fill="#4a9a4a"/><rect x="9" y="2" width="5" height="4" fill="#f4f4f4"/><rect x="0" y="1" width="4" height="4" fill="#e8a030"/></svg>
<span style="left:835px;top:57.8px;height:15.5px;line-height:15.5px;font-size:11.5px;color:#1b1b1b;font-weight:700;transform:scaleX(0.870);transform-origin:0 50%;">動画建</span>
<span style="left:58px;top:81.5px;height:16px;line-height:16px;font-size:12px;color:#1b1b1b;font-weight:700;transform:scaleX(1.000);transform-origin:0 50%;">細目重</span>
<svg style="left:97px;top:81px" width="14" height="8" viewBox="0 0 14 8"><path d="M2 3.5 Q6 2 11 3.2 V5" stroke="#333" stroke-width="1.4" fill="none"/></svg>
<div style="left:111px;top:80px;width:1px;height:19px;background:#c4c4c4"></div>
<div style="left:118px;top:80px;width:134px;height:18px;background:#fff;border:1px solid #a9a9a9;border-right-color:#c8c8c8;border-bottom-color:#c8c8c8"></div>
<span style="left:123px;top:81.5px;height:16px;line-height:16px;font-size:12px;color:#1b1b1b;font-weight:500;transform:scaleX(0.917);transform-origin:0 50%;">彐乀帯启由</span>
<div style="left:241px;top:81px;width:1px;height:16px;background:#555"></div>
<div style="left:243px;top:89px;width:7px;height:1.6px;background:#222"></div>
<svg style="left:258px;top:83px" width="13" height="14" viewBox="0 0 13 14"><path d="M3 2 Q8 1 7 5 Q3 7 6 9 Q10 10 9 12 M2 9 L6 6 M7 7 L11 4" stroke="#222" stroke-width="1.5" fill="none"/></svg>
<div style="left:282px;top:81px;width:16px;height:17px;background:#f6e45a;border:1px solid #cdb93a"></div>
<svg style="left:285px;top:85px" width="10" height="9" viewBox="0 0 10 9"><path d="M1 2 H8 V7 M3 4 H6" stroke="#6a5a10" stroke-width="1.3" fill="none"/></svg>
<div style="left:297px;top:80px;width:86px;height:18px;background:#fff;border:1px solid #c4c4c4"></div>
<span style="left:302px;top:81.8px;height:15.5px;line-height:15.5px;font-size:11.5px;color:#1b1b1b;font-weight:400;transform:scaleX(.8);transform-origin:0 50%">[賱鬬]</span>
<span style="left:332px;top:81.8px;height:15.5px;line-height:15.5px;font-size:11.5px;color:#1b1b1b;font-weight:500;transform:scaleX(0.783);transform-origin:0 50%;">圦后—</span>
<div style="left:60px;top:101px;width:170px;height:27px;background:linear-gradient(#e6e6e6 0,#d9d9d9 12%,#d0d0d0 100%);border:1px solid #a8a8a8;border-top:none;box-shadow:0 1px 2px rgba(0,0,0,.35)"></div>
<svg style="left:63px;top:108px" width="24" height="13" viewBox="0 0 24 13"><path d="M8 3 L3 6.5 L8 10Z" fill="#111" stroke="#f4f4f4" stroke-width="1.2" paint-order="stroke"/><path d="M15 3 L20 6.5 L15 10Z" fill="#111" stroke="#f4f4f4" stroke-width="1.2" paint-order="stroke"/></svg>
<span style="left:85px;top:107.2px;height:15.5px;line-height:15.5px;font-size:11.5px;color:#1b1b1b;font-weight:700;transform:scaleX(0.891);transform-origin:0 50%;">㨨覗匣罱</span>
<svg style="left:4px;top:122px" width="20" height="10" viewBox="0 0 20 10"><path d="M2 3 Q8 1.5 17 2.5 M3 6.5 Q9 7.5 15 6" stroke="#161616" stroke-width="1.7" fill="none" stroke-linecap="round" stroke-linejoin="round"/></svg>
<svg style="left:4px;top:139px" width="20" height="17" viewBox="0 0 20 17"><path d="M5 3 Q1 7 3 12 Q6 14 8 9 M8 2 V13 M10 4 Q15 3 14 8 Q12 12 17 14 M3 7 H9" stroke="#161616" stroke-width="1.7" fill="none" stroke-linecap="round" stroke-linejoin="round"/></svg>
<svg style="left:28px;top:139px" width="21" height="17" viewBox="0 0 21 17"><path d="M5 2 H16 V8 H5 Z M2 9 H18 M16 9 V14 L13 15" stroke="#161616" stroke-width="1.7" fill="none" stroke-linecap="round" stroke-linejoin="round"/></svg>
<svg style="left:2px;top:162px" width="22" height="20" viewBox="0 0 22 20"><path d="M13 2 L5 18 M2 18 H20 M8 8 H19 L16 17 M12 2 L14 4" stroke="#161616" stroke-width="1.7" fill="none" stroke-linecap="round" stroke-linejoin="round"/></svg>
<svg style="left:30px;top:163px" width="17" height="18" viewBox="0 0 17 18"><path d="M8 2 Q14 3 13 9 Q10 14 5 12 Q2 8 7 6 Q11 6 10 10 M4 14 Q9 17 13 12 L14 15" stroke="#161616" stroke-width="1.7" fill="none" stroke-linecap="round" stroke-linejoin="round"/></svg>
<svg style="left:4px;top:188px" width="21" height="19" viewBox="0 0 21 19"><path d="M6 2 H15 M6 5 H15 M6 2 V8 M3 9 H19 M7 12 H14 M6 15 H15 M10 9 V16 M4 17 L7 15" stroke="#161616" stroke-width="1.6" fill="none" stroke-linecap="round" stroke-linejoin="round"/></svg>
<svg style="left:29px;top:188px" width="20" height="19" viewBox="0 0 20 19"><path d="M17 2 L4 13 L15 16 L11 4 M3 12 L7 16 M5 11 L9 15 M2 13 L5 17" stroke="#161616" stroke-width="1.6" fill="none" stroke-linecap="round" stroke-linejoin="round"/></svg>
<svg style="left:4px;top:214px" width="19" height="17" viewBox="0 0 19 17"><path d="M3 3 H15 M5 3 Q3 8 6 10 Q10 12 13 9 Q15 5 11 4 M9 6 V9 M6 10 L3 15 M12 10 L15 14 M9 12 V16" stroke="#161616" stroke-width="1.5" fill="none" stroke-linecap="round" stroke-linejoin="round"/></svg>
<svg style="left:28px;top:214px" width="19" height="18" viewBox="0 0 19 18"><path d="M3 10 Q5 2 13 3 Q18 6 14 11 Q9 15 3 10 Z M7 5 L12 12 M3 12 L9 17 L16 12" stroke="#161616" stroke-width="1.6" fill="none" stroke-linecap="round" stroke-linejoin="round"/></svg>
<div style="left:6px;top:236px;width:40px;height:1px;background:#c4c4c4"></div>
<svg style="left:4px;top:242px" width="20" height="16" viewBox="0 0 20 16"><path d="M2 5 H14 M12 2 L17 6 L9 9 M3 8 L14 12 L15 8 M9 10 L12 14" stroke="#161616" stroke-width="1.6" fill="none" stroke-linecap="round" stroke-linejoin="round"/></svg>
<div style="left:28px;top:247.5px;width:20px;height:3.4px;background:#111"></div>
<div style="left:36.3px;top:242px;width:3.4px;height:16px;background:#111"></div>
<svg style="left:4px;top:266px" width="20" height="16" viewBox="0 0 20 16"><path d="M3 2 H16 V13 H3 Z M3 12 H16" stroke="#161616" stroke-width="1.7" fill="none" stroke-linecap="round" stroke-linejoin="round"/></svg>
<svg style="left:29px;top:267px" width="19" height="14" viewBox="0 0 19 14"><path d="M7 3 H16 V11 M2 11.5 H16" stroke="#161616" stroke-width="1.9" fill="none" stroke-linecap="round" stroke-linejoin="round"/></svg>
<div style="left:4px;top:285px;width:44px;height:1px;background:#c0c0c0"></div>
<svg style="left:5px;top:290px" width="16" height="18" viewBox="0 0 16 18"><path d="M3 15 V5 H8 V14 M12 2 V14 L14 15" stroke="#161616" stroke-width="1.6" fill="none" stroke-linecap="round" stroke-linejoin="round"/></svg>
<svg style="left:28px;top:290px" width="19" height="19" viewBox="0 0 19 19"><path d="M3 3 Q6 1 8 5 Q9 10 14 12 Q17 13 16 16 Q13 18 9 13 Q4 8 3 3 Z" stroke="#161616" stroke-width="1.7" fill="none" stroke-linecap="round" stroke-linejoin="round"/></svg>
<svg style="left:3px;top:316px" width="20" height="18" viewBox="0 0 20 18"><path d="M2 9 L8 6 L9 2 L13 3 L19 5 L18 8 H15 V16 H2 Z" fill="#111"/><rect x="3.5" y="10" width="7" height="5" fill="#e4e4e4"/></svg>
<svg style="left:28px;top:317px" width="20" height="17" viewBox="0 0 20 17"><path d="M1 5.5 Q3 1.5 7 2.8 Q10 0.8 13 2.8 Q17 1.5 19 5.5 V8 H1Z" fill="#e3211c"/><rect x="1" y="8" width="18" height="1.6" fill="#f4f4f4"/><path d="M2 10 H19 V12.3 H4.6 V16.5 H2Z" fill="#1b2b4c"/><path d="M6.5 13.6 H11 V16.5 H9.2 V15.2 H6.5Z" fill="#15203a"/><path d="M12 13.4 H19" stroke="#3a5a9a" stroke-width="1.2"/></svg>
<svg style="left:3px;top:341px" width="22" height="19" viewBox="0 0 22 19"><path d="M11 3 Q4 3 4 9 Q5 14 11 13 Q16 12 15 7 Q14 3 11 3 Z M13 12 L19 17" stroke="#161616" stroke-width="1.9" fill="none" stroke-linecap="round" stroke-linejoin="round"/></svg>
<svg style="left:28px;top:341px" width="21" height="19" viewBox="0 0 21 19"><path d="M2 4 H10 M5 4 V11 Q9 13 12 9 M11 3 L15 4 M17 2 Q17 10 12 16" stroke="#161616" stroke-width="1.9" fill="none" stroke-linecap="round" stroke-linejoin="round"/></svg>
<svg style="left:2px;top:366px" width="22" height="17" viewBox="0 0 22 17"><path d="M3 2 L7 5 L15 3 L19 10 L13 14 L7 12 L3 14 M7 5 L7 12 M13 14 L15 15" stroke="#161616" stroke-width="1.8" fill="none" stroke-linecap="round" stroke-linejoin="round"/></svg>
<svg style="left:28px;top:367px" width="20" height="16" viewBox="0 0 20 16"><path d="M2 2 H17 Q18 12 12 14 Q5 14 3 10 Z" stroke="#161616" stroke-width="1.8" fill="none" stroke-linecap="round" stroke-linejoin="round"/></svg>
<svg style="left:3px;top:389px" width="21" height="18" viewBox="0 0 21 18"><path d="M5 15 Q13 13 17 8 Q15 5 12 3" stroke="#111" stroke-width="1.7" fill="none" stroke-linecap="round"/><circle cx="12" cy="3" r="1.6" fill="#111"/><circle cx="4.5" cy="15" r="1.6" fill="#111"/></svg>
<svg style="left:31px;top:390px" width="16" height="21" viewBox="0 0 16 21"><path d="M7 1 L2 9 L5 19 L9 8Z" fill="#e8963a"/><path d="M8 2 L12 8 L6 19 L5 10Z" fill="#c8281e"/><path d="M10 4 L15 11 Q14 15 9 14 L12 9Z" fill="#2a5a5e"/><path d="M7 1 L4 5 L2 3Z" fill="#f0d0b0"/></svg>
<svg style="left:4px;top:418px" width="19" height="16" viewBox="0 0 19 16"><path d="M2 2 H16 L12 12 L5 10 Z M14 13 L15 14" stroke="#161616" stroke-width="1.8" fill="none" stroke-linecap="round" stroke-linejoin="round"/></svg>
<svg style="left:30px;top:417px" width="17" height="17" viewBox="0 0 17 17"><path d="M5 1 H11 V4 H5Z M3 5 H13 V8 H3Z" fill="#111"/><rect x="1" y="9" width="15" height="7" fill="#111"/><path d="M1 11.5 H16 M5 9 V16 M9 9 V16 M13 9 V16" stroke="#bbb" stroke-width=".8"/></svg>
<div style="left:4px;top:436px;width:20px;height:30px;border:1px solid #c3c3c3;border-top:none;border-right:none"></div>
<svg style="left:5px;top:441px" width="18" height="19" viewBox="0 0 18 19"><path d="M3 2 H7 M3 3 V7 Q9 5 12 10 Q13 14 14 16" stroke="#161616" stroke-width="2" fill="none" stroke-linecap="round" stroke-linejoin="round"/></svg>
<svg style="left:28px;top:441px" width="20" height="18" viewBox="0 0 20 18"><path d="M4 3 Q2 6 5 8 Q9 10 12 8 V4 M13 3 H16 V13 L14 14" stroke="#161616" stroke-width="1.9" fill="none" stroke-linecap="round" stroke-linejoin="round"/></svg>
<svg style="left:4px;top:468px" width="19" height="16" viewBox="0 0 19 16"><path d="M3 2 L14 6 M13 2 L5 12 L2 12 M8 7 L15 13 V9" stroke="#161616" stroke-width="1.9" fill="none" stroke-linecap="round" stroke-linejoin="round"/></svg>
<svg style="left:29px;top:465px" width="20" height="19" viewBox="0 0 20 19"><path d="M2 15 L14 5" stroke="#2a3a3a" stroke-width="4" stroke-linecap="round"/><circle cx="14.5" cy="5" r="3.6" fill="#de2626"/><path d="M2 14 L8 10 L10 13 L4 17Z" fill="#c21e1e"/><circle cx="17" cy="10" r="1.2" fill="#222"/></svg>
<svg style="left:4px;top:491px" width="19" height="19" viewBox="0 0 19 19"><path d="M4 3 L3 10 L10 16 L15 7 L5 8" stroke="#161616" stroke-width="1.9" fill="none" stroke-linecap="round" stroke-linejoin="round"/></svg>
<svg style="left:27px;top:491px" width="21" height="19" viewBox="0 0 21 19"><path d="M2 6 Q6 1 9 5 Q12 8 16 6 L18 3 M17 5 Q15 12 9 16" stroke="#161616" stroke-width="1.9" fill="none" stroke-linecap="round" stroke-linejoin="round"/></svg>
<svg style="left:3px;top:518px" width="22" height="17" viewBox="0 0 22 17"><path d="M2 7 H19 M5 4 L2 7 L5 10 M15 3 L19 7 M16 10 L19 7 M13 8 V14" stroke="#161616" stroke-width="1.7" fill="none" stroke-linecap="round" stroke-linejoin="round"/></svg>
<svg style="left:28px;top:516px" width="21" height="20" viewBox="0 0 21 20"><circle cx="10.5" cy="10.5" r="9" fill="#2a56c8"/><path d="M4 14 Q2 6 10 3 Q18 4 18 13" fill="#5a8cf0"/><path d="M6 17 Q3 11 6 9 L9 12 Q7 15 9 18Z M12 18 Q14 14 12 11 L16 9 Q19 13 15 18Z" fill="#1a2a8a"/><path d="M9 11 Q11 8 14 10 L13 13 H9Z" fill="#dfe8fb"/></svg>
<div style="left:5px;top:542px;width:42px;height:40px;background:#0c0c0c"></div>
<div style="left:6px;top:543.0px;width:9.2px;height:8.9px;background:#0c0c0c"></div>
<div style="left:16px;top:543.0px;width:9.2px;height:8.9px;background:#0c0c0c"></div>
<div style="left:26px;top:543.0px;width:9.2px;height:8.9px;background:#8ebdf0"></div>
<div style="left:36px;top:543.0px;width:9.2px;height:8.9px;background:#ffffff"></div>
<div style="left:6px;top:552.75px;width:9.2px;height:8.9px;background:#0c0c0c"></div>
<div style="left:16px;top:552.75px;width:9.2px;height:8.9px;background:#dd2211"></div>
<div style="left:26px;top:552.75px;width:9.2px;height:8.9px;background:#2196f3"></div>
<div style="left:36px;top:552.75px;width:9.2px;height:8.9px;background:#49a6f2"></div>
<div style="left:6px;top:562.5px;width:9.2px;height:8.9px;background:#ffffff"></div>
<div style="left:16px;top:562.5px;width:9.2px;height:8.9px;background:#0c0c0c"></div>
<div style="left:26px;top:562.5px;width:9.2px;height:8.9px;background:#0c0c0c"></div>
<div style="left:36px;top:562.5px;width:9.2px;height:8.9px;background:#ffffff"></div>
<div style="left:6px;top:572.25px;width:9.2px;height:8.9px;background:#ffffff"></div>
<div style="left:16px;top:572.25px;width:9.2px;height:8.9px;background:#ffffff"></div>
<div style="left:26px;top:572.25px;width:9.2px;height:8.9px;background:#ffffff"></div>
<div style="left:36px;top:572.25px;width:9.2px;height:8.9px;background:#ffffff"></div>
<div style="left:6px;top:548px;width:10px;height:5px;background:#e0301a"></div>
<div style="left:26px;top:543px;width:10px;height:9px;background:linear-gradient(90deg,#6fa8ec,#a9cdf6)"></div>
<div style="left:36px;top:558px;width:10px;height:2px;background:#d6ecfb"></div>
<svg style="left:5px;top:590px" width="15" height="18" viewBox="0 0 15 18"><path d="M7.5 1 V14 M3 10 L7.5 15 L12 11" stroke="#777" stroke-width="1.6" fill="none"/></svg>
<svg style="left:29px;top:590px" width="20" height="18" viewBox="0 0 20 18"><path d="M4 16 Q5 7 14 4" stroke="#777" stroke-width="2.6" fill="none"/><path d="M11 1 L17 4 L13 8" stroke="#777" stroke-width="1.6" fill="none"/></svg>
<div style="left:2px;top:616px;width:48px;height:1px;background:#bcbcbc"></div>
<span style="left:6px;top:621.2px;height:15.5px;line-height:15.5px;font-size:11.5px;color:#1b1b1b;font-weight:500;transform:scaleX(0.913);transform-origin:0 50%;">优龚</span>
<span style="left:6px;top:639.2px;height:15.5px;line-height:15.5px;font-size:11.5px;color:#1b1b1b;font-weight:500;transform:scaleX(0.870);transform-origin:0 50%;">囸</span>
<div style="left:0px;top:687px;width:52px;height:1px;background:#bcbcbc"></div>
<span style="left:5px;top:690.2px;height:15.5px;line-height:15.5px;font-size:11.5px;color:#1b1b1b;font-weight:500;transform:scaleX(1.043);transform-origin:0 50%;">仿亯</span>
<span style="left:5px;top:709.2px;height:15.5px;line-height:15.5px;font-size:11.5px;color:#1b1b1b;font-weight:500;transform:scaleX(0.957);transform-origin:0 50%;">俵袤</span>
<svg style="left:130px;top:838px" width="16" height="20" viewBox="0 0 16 20"><path d="M9 3 Q11 7 8 11 L3 15 M8 11 L11 9" stroke="#444" stroke-width="1.5" fill="none"/></svg>
<svg style="left:526.5px;top:836px" width="25" height="25" viewBox="0 0 25 25"><rect x="0" y="0" width="24.5" height="24" fill="#f4f4ee"/><rect x="0" y="0" width="24" height="24" fill="none" stroke="#c9c48a" stroke-width="1.5"/><path d="M2 2 H22 V8 H2Z M2 16 H22 V22 H2Z" fill="#efe26a"/><path d="M8 0 V24 M16 0 V24 M0 8 H24 M0 16 H24" stroke="#b9b27a" stroke-width="1.4"/><rect x="8" y="8" width="8" height="8" fill="#fbfbf4"/></svg>
<svg style="left:558px;top:836px" width="25" height="25" viewBox="0 0 25 25"><rect x="0" y="0" width="24.5" height="24" fill="#2f97ec"/><rect x="1" y="1" width="22.5" height="22" fill="none" stroke="#9fd0fa" stroke-width="1.2"/><path d="M4 18 V6 L8 5 V18 M8 6 L20 4 V16" stroke="#c9e6fc" stroke-width="1.3" fill="none"/><rect x="0" y="17" width="24.5" height="7" fill="#1c7fd8"/></svg>
<svg style="left:591px;top:836px" width="25" height="25" viewBox="0 0 25 25"><rect x="0" y="0" width="24.5" height="24" fill="#20b23a"/><ellipse cx="12" cy="12.5" rx="6" ry="8" fill="#e8e23a"/><path d="M12 4.5 A6 8 0 0 0 8 19 L12 12.5Z" fill="#e0382c"/><path d="M12 4.5 A6 8 0 0 1 17 17 L12 12.5Z" fill="#3a5ce0"/><path d="M8 19 Q12 22 17 17 L12 12.5Z" fill="#8a3ac8"/><rect x="0" y="0" width="24.5" height="24" fill="none" stroke="#148a28" stroke-width="2"/></svg>
<svg style="left:624px;top:836px" width="25" height="25" viewBox="0 0 25 25"><rect x="0" y="0" width="24.5" height="24" fill="#1c44d8"/><path d="M6 5 L19 20 M18 6 L8 19" stroke="#f2f4ff" stroke-width="2.6" stroke-linecap="round"/><circle cx="5" cy="5" r="2.6" fill="#e83a3a"/><path d="M16 4 L20 8" stroke="#9fd0fa" stroke-width="2"/></svg>
<svg style="left:657px;top:836px" width="25" height="25" viewBox="0 0 25 25"><rect x="0" y="0" width="24.5" height="24" fill="#170606"/><rect x="8" y="0" width="10" height="24" fill="#e81c1c"/><rect x="18" y="0" width="6.5" height="24" fill="#a01212"/><rect x="0" y="8" width="8" height="9" fill="#7a1010"/><path d="M4 9 V15 M4 12 H10 M8 10 V14 M14 12 H20" stroke="#fbeaea" stroke-width="1.3"/></svg>
<svg style="left:690px;top:836px" width="25" height="25" viewBox="0 0 25 25"><rect x="0" y="0" width="24.5" height="24" fill="#2db0f6"/><rect x="0" y="0" width="24.5" height="24" fill="none" stroke="#1c8ed8" stroke-width="1.6"/><path d="M9 9 V17 M13 8 V17 M8 13 H17 M16 10 V16" stroke="#e6f6ff" stroke-width="1.4"/></svg>
<svg style="left:723.5px;top:836px" width="25" height="25" viewBox="0 0 25 25"><rect x="0" y="0" width="24.5" height="24" fill="#3b3b3b"/><path d="M8 6 Q5 7 8 11 Q11 15 7 18 M6 12 H11 M13 17 L19 8 M14 10 L18 15" stroke="#f2f2f2" stroke-width="1.7" fill="none" stroke-linecap="round"/></svg>
<svg style="left:756px;top:836px" width="25" height="25" viewBox="0 0 25 25"><rect x="0" y="0" width="24.5" height="24" fill="#333333"/><path d="M6 8 Q6 5 12 5 H17 Q20 5 19 9 Q18 13 13 12 H10 L6 18 L7 12 Q6 11 6 8Z M10 9 H16" stroke="#f4f4f4" stroke-width="1.6" fill="none" stroke-linejoin="round"/></svg>
<svg style="left:820px;top:840px" width="17" height="18" viewBox="0 0 17 18"><rect x="0" y="0" width="16" height="16" fill="#e8d84a" stroke="#b9a83a"/><rect x="3" y="3" width="10" height="7" fill="#f6f0a0"/><rect x="3" y="11" width="10" height="3" fill="#4aa84a"/></svg>
<svg style="left:847px;top:840px" width="17" height="18" viewBox="0 0 17 18"><rect x="0" y="0" width="15.5" height="16" fill="#c87a1e"/><rect x="5" y="0" width="5" height="16" fill="#6a4a2a"/><rect x="0" y="0" width="3" height="16" fill="#e8a83a"/><rect x="12" y="0" width="3.5" height="16" fill="#e8962a"/></svg>
<svg style="left:871px;top:839px" width="20" height="20" viewBox="0 0 20 20"><circle cx="10" cy="10" r="9" fill="#d8202a"/><circle cx="10" cy="9" r="5" fill="#f2a0a8"/><path d="M6 9 H14 M8 6 V12 M12 6 V12" stroke="#c0303a" stroke-width="1.2"/><path d="M5 15 Q10 18 15 15" stroke="#8a1018" stroke-width="1.5" fill="none"/></svg>
<div style="left:899px;top:837px;width:217px;height:21px;background:#fff;border:1px solid #cfcfcf"></div>
<svg style="left:906px;top:838px" width="19" height="19" viewBox="0 0 19 19"><ellipse cx="9.5" cy="9.5" rx="9" ry="8" fill="#2846b8"/><ellipse cx="9.5" cy="9.5" rx="6" ry="5" fill="none" stroke="#b9c8f4" stroke-width="1.6"/><ellipse cx="10" cy="9.5" rx="2.8" ry="2.4" fill="#1a2a7a"/><path d="M3 5 Q9 1 16 5" stroke="#7a9af0" stroke-width="1.4" fill="none"/></svg>
<svg style="left:931px;top:840px" width="15" height="15" viewBox="0 0 15 15"><path d="M7.5 1 V14 M1 7.5 H14" stroke="#1c64d8" stroke-width="3.2"/></svg>
<span style="left:950px;top:839.8px;height:15.5px;line-height:15.5px;font-size:11.5px;color:#2456b8;font-weight:500;transform:scaleX(0.870);transform-origin:0 50%;">臼</span>
<svg style="left:961px;top:840px" width="4" height="15" viewBox="0 0 4 15"><path d="M2 1 V13" stroke="#2456b8" stroke-width="1.5"/></svg>
<span style="left:966px;top:839.5px;height:16px;line-height:16px;font-size:12px;color:#2456b8;font-weight:500;">G</span>
<span style="left:977px;top:840.0px;height:15px;line-height:15px;font-size:11px;color:#1b1b1b;font-weight:500;transform:scaleX(0.864);transform-origin:0 50%;">甼吐</span>
<span style="left:1003px;top:840.0px;height:15px;line-height:15px;font-size:11px;color:#1b1b1b;font-weight:500;transform:scaleX(1.000);transform-origin:0 50%;">引扐的田丁</span>
<svg style="left:1126px;top:837px" width="10" height="20" viewBox="0 0 10 20"><path d="M5 2 H2 V18 H5 M7 3 L8 1" stroke="#333" stroke-width="1.5" fill="none"/></svg>
<div style="left:983px;top:100px;width:169px;height:512px;background:#d5d5d5"></div>
<div style="left:982px;top:100px;width:1px;height:512px;background:rgba(30,50,42,.55)"></div>
<div style="left:983px;top:100px;width:169px;height:13px;background:linear-gradient(#656565,#6e6e6e)"></div>
<span style="left:1130px;top:100.2px;height:13.5px;line-height:13.5px;font-size:9.5px;color:#dcdcdc;font-weight:500;transform:scaleX(0.947);transform-origin:0 50%;">妩部</span>
<div style="left:983px;top:114px;width:169px;height:19px;background:#d9d9d9"></div>
<div style="left:1040px;top:115px;width:112px;height:17px;background:linear-gradient(#c6c6c6,#b3b3b3);border-top:1px solid #cfcfcf"></div>
<svg style="left:989px;top:117px" width="13" height="14" viewBox="0 0 13 14"><rect x="1" y="1" width="10" height="12" rx="1" fill="#e6d83a"/><rect x="3" y="3" width="5" height="5" fill="#f6f3b0"/><rect x="8" y="2" width="3" height="10" fill="#8a8a5a"/></svg>
<span style="left:1004px;top:115.8px;height:15.5px;line-height:15.5px;font-size:11.5px;color:#1b1b1b;font-weight:700;transform:scaleX(0.870);transform-origin:0 50%;">藏華亘</span>
<svg style="left:1131px;top:117px" width="15" height="14" viewBox="0 0 15 14"><path d="M1.5 1 V13 M12.5 1 V13 M1.5 5.5 H12.5 M1.5 8.5 H12.5" stroke="#5a5a5a" stroke-width="1.5" fill="none"/><rect x="2.5" y="6" width="9" height="2" fill="#e8e8e8"/></svg>
<svg style="left:991px;top:138px" width="18" height="16" viewBox="0 0 18 16"><rect x="0" y="0" width="17" height="15" fill="#2a5a8c"/><path d="M3 2 L8 1 L6 6 H13 M4 13 L9 7 L14 13 M2 8 H6" stroke="#eef4fb" stroke-width="2" fill="none"/></svg>
<div style="left:991px;top:154.5px;width:137px;height:78px;background:#a3a3a3"></div>
<div style="left:991px;top:154.5px;width:137px;height:19px;background:#9b9b9b"></div>
<svg style="left:1010px;top:157px" width="14" height="14" viewBox="0 0 14 14"><rect x="0" y="0" width="13.5" height="13" rx="1" fill="#f6f6f6"/><rect x="3.5" y="2" width="7" height="3" fill="#9b9b9b"/><rect x="3" y="7" width="7.5" height="4" fill="#9b9b9b"/></svg>
<span style="left:1026px;top:157.5px;height:14px;line-height:14px;font-size:10px;color:#ececec;font-weight:700;transform:scaleX(1.000);transform-origin:0 50%;">亩</span>
<span style="left:1107px;top:156.0px;height:16px;line-height:16px;font-size:12px;color:#555;font-weight:500;transform:scaleX(1.083);transform-origin:0 50%;">扫</span>
<div style="left:1009px;top:174px;width:96px;height:18.5px;background:linear-gradient(90deg,#d0d0d0,#c4c4c4)"></div>
<svg style="left:1009px;top:175px" width="16" height="17" viewBox="0 0 16 17"><rect x="0" y="0" width="15.5" height="16.5" fill="#fafafa"/><rect x="3.5" y="4" width="8" height="9.5" fill="#1e5a7c"/><path d="M7 7 V11 M7 11 H9" stroke="#cfe6f2" stroke-width="1"/></svg>
<span style="left:1029px;top:176.8px;height:14.5px;line-height:14.5px;font-size:10.5px;color:#333;font-weight:500;transform:scaleX(0.905);transform-origin:0 50%;">圡窋</span>
<div style="left:996px;top:192.3px;width:132px;height:1.2px;background:#6e6e6e"></div>
<div style="left:996px;top:193.5px;width:110px;height:1px;background:#d8d8d8"></div>
<div style="left:991px;top:194.5px;width:137px;height:18px;background:#a0a0a0"></div>
<span style="left:1011px;top:195.5px;height:16px;line-height:16px;font-size:12px;color:#0a0a0a;font-weight:900;transform:scaleX(0.875);transform-origin:0 50%;">带干</span>
<span style="left:1107px;top:195.5px;height:16px;line-height:16px;font-size:12px;color:#7d7d7d;font-weight:500;transform:scaleX(1.083);transform-origin:0 50%;">晵</span>
<div style="left:991px;top:213px;width:137px;height:1px;background:#b4b4b4"></div>
<div style="left:991px;top:214px;width:137px;height:18.5px;background:#a9a9a9"></div>
<span style="left:1011px;top:215.5px;height:16px;line-height:16px;font-size:12px;color:#6c6c6c;font-weight:700;transform:scaleX(0.875);transform-origin:0 50%;">慁乯</span>
<div style="left:983px;top:240px;width:169px;height:12px;background:linear-gradient(#656565,#6e6e6e)"></div>
<span style="left:1130px;top:239.8px;height:13.5px;line-height:13.5px;font-size:9.5px;color:#dcdcdc;font-weight:500;transform:scaleX(0.947);transform-origin:0 50%;">庙甫</span>
<div style="left:983px;top:252.5px;width:169px;height:19px;background:#d9d9d9"></div>
<div style="left:1040px;top:253.5px;width:112px;height:17px;background:linear-gradient(#c6c6c6,#b3b3b3);border-top:1px solid #cfcfcf"></div>
<svg style="left:989px;top:255.5px" width="13" height="14" viewBox="0 0 13 14"><rect x="1" y="1" width="11" height="12" rx="1.5" fill="#f4f0ea" stroke="#e87a2a" stroke-width="1.3"/><rect x="3" y="3" width="4" height="8" fill="#3aa85a"/><rect x="7" y="5" width="3.5" height="6" fill="#e83a2a"/><rect x="5" y="2.5" width="5" height="3" fill="#f0c83a"/></svg>
<span style="left:1004px;top:254.2px;height:15.5px;line-height:15.5px;font-size:11.5px;color:#1b1b1b;font-weight:700;transform:scaleX(0.870);transform-origin:0 50%;">灌亖孑</span>
<svg style="left:1131px;top:255.5px" width="15" height="14" viewBox="0 0 15 14"><path d="M1.5 1 V13 M12.5 1 V13 M1.5 5.5 H12.5 M1.5 8.5 H12.5" stroke="#5a5a5a" stroke-width="1.5" fill="none"/><rect x="2.5" y="6" width="9" height="2" fill="#e8e8e8"/></svg>
<svg style="left:991px;top:274px" width="21" height="22" viewBox="0 0 21 22"><path d="M3 8 L10 3 L13 7 L8 12Z" fill="#6a4a1a"/><circle cx="15" cy="5" r="3.2" fill="#e6d22a"/><rect x="9" y="9" width="8" height="6" fill="#2a9a6a"/><path d="M1 14 Q8 10 18 15 Q12 21 2 19Z" fill="#e0261e"/><path d="M2 10 L8 13" stroke="#3a8a3a" stroke-width="2"/></svg>
<div style="left:1015px;top:283.7px;width:78px;height:6.6px;background:linear-gradient(90deg,#3a3a3a 0,#3a3a3a 28%,#5a1410 36%,#d81a14 46%,#c01812 54%,#4a201a 64%,#333 72%,#333 100%)"></div>
<div style="left:1016px;top:284.5px;width:9px;height:5px;background:#fff"></div>
<div style="left:1026px;top:284.5px;width:10.5px;height:5px;background:linear-gradient(#f6d64a,#e6b830)"></div>
<div style="left:1091px;top:279px;width:30px;height:16px;background:linear-gradient(#fdfdfd,#dedede);border:1px solid #9a9a9a;border-radius:2px;box-shadow:0 1px 1px rgba(0,0,0,.3)"></div>
<svg style="left:991px;top:303px" width="19" height="33" viewBox="0 0 19 33"><rect x="0" y="1" width="7" height="9" fill="#5a0e12"/><rect x="1" y="5" width="5" height="4" fill="#8a1a1a"/><rect x="9" y="2" width="6" height="8" fill="#3aa89a"/><rect x="8" y="11" width="7" height="7" fill="#2a9a7a"/><rect x="7" y="21" width="9" height="9" rx="1" fill="#f6a21e"/><rect x="7" y="0" width="2" height="5" fill="#222"/></svg>
<div style="left:1016px;top:311.8px;width:77px;height:6.6px;background:#3a3a3a"></div>
<div style="left:1017px;top:312.6px;width:14px;height:5px;background:#fff"></div>
<div style="left:1091px;top:307px;width:30px;height:16px;background:linear-gradient(#fdfdfd,#dedede);border:1px solid #9a9a9a;border-radius:2px;box-shadow:0 1px 1px rgba(0,0,0,.3)"></div>
<div style="left:1122px;top:309px;width:15px;height:13.5px;background:linear-gradient(#f4f4f4,#d4d4d4);border:1px solid #a4a4a4;border-radius:2px"></div>
<svg style="left:1125px;top:312px" width="10" height="8" viewBox="0 0 10 8"><path d="M2 6 Q2 3 8 3 V2" stroke="#222" stroke-width="1.5" fill="none"/></svg>
<div style="left:990px;top:335px;width:19px;height:15px;background:#f6f6f6;border:1px solid #7a7a7a;box-shadow:1px 1px 0 #555"></div>
<svg style="left:994px;top:337px" width="11" height="11" viewBox="0 0 11 11"><path d="M5.5 1 Q9 1 9 4.5 Q9 7 6 7.5 V9.5 H3 M5.5 1 Q2 1 2 4.5 Q2 7 5 7" stroke="#111" stroke-width="1.8" fill="none"/></svg>
<div style="left:1016px;top:339px;width:77px;height:6.5px;background:linear-gradient(90deg,#1e1e1e 0,#241a18 55%,#5a3a30 60%,#b09088 64%,#6a4a40 69%,#3a1a14 75%,#2a1612 100%)"></div>
<span style="left:1016px;top:343.8px;height:10.5px;line-height:10.5px;font-size:6.5px;color:#333;font-weight:700;">㎡</span>
<span style="left:1083px;top:344.0px;height:10px;line-height:10px;font-size:6px;color:#222;font-weight:700;">OP</span>
<div style="left:1092px;top:335px;width:25px;height:15.5px;background:linear-gradient(#9a9a9a,#8a8a8a);border:1px solid #707070"></div>
<div style="left:1097px;top:338.5px;width:6px;height:9.5px;background:#f2f2f2"></div>
<div style="left:1106px;top:338.5px;width:6px;height:9.5px;background:#f2f2f2"></div>
<svg style="left:991px;top:360px" width="19" height="17" viewBox="0 0 19 17"><path d="M2 2 H15 L17 4 V8 L8 9 L7 15 L2 16 Z" fill="#3c3c3c"/><path d="M6 6 L13 5 L8 11Z" fill="#e4e4e4"/></svg>
<div style="left:1015px;top:365.5px;width:83px;height:7px;background:linear-gradient(90deg,#6a5a3a 0,#6a5a3a 10%,#333 14%,#333 100%)"></div>
<div style="left:1025px;top:366.5px;width:11px;height:5px;background:linear-gradient(#f6f04a,#e8de3a);box-shadow:0 0 2px #f6f04a"></div>
<div style="left:1096px;top:362px;width:11.5px;height:15.5px;background:linear-gradient(#fff,#e0e0e0);border:1px solid #8a8a8a;border-radius:1.5px"></div>
<svg style="left:1107px;top:364px" width="5" height="10" viewBox="0 0 5 10"><path d="M0 1 L4 5 L0 9Z" fill="#111"/></svg>
<div style="left:1119px;top:363px;width:23px;height:15.5px;background:linear-gradient(#f4f4f4,#d0d0d0);border:1px solid #a4a4a4;border-radius:2px"></div>
<svg style="left:1126px;top:366px" width="10" height="10" viewBox="0 0 10 10"><path d="M2 2 Q7 1 6 4 Q3 6 6 7 Q9 8 7 9" stroke="#222" stroke-width="1.4" fill="none"/></svg>
<div style="left:993px;top:404px;width:149px;height:15px;background:linear-gradient(90deg,#e00000 0,#ff2000 6%,#e8e000 16%,#10d010 27%,#00d8d8 40%,#1040ff 52%,#6018e0 66%,#7a1a9a 80%,#3a0a4a 92%,#180818 100%)"></div>
<div style="left:993px;top:404px;width:149px;height:15px;background:linear-gradient(180deg,rgba(255,255,255,.25) 0,rgba(0,0,0,0) 20%,rgba(0,0,0,.15) 55%,rgba(0,0,0,.92) 100%)"></div>
<div style="left:983px;top:425px;width:169px;height:11.5px;background:linear-gradient(#656565,#6e6e6e)"></div>
<span style="left:1130px;top:424.5px;height:13.5px;line-height:13.5px;font-size:9.5px;color:#dcdcdc;font-weight:500;transform:scaleX(0.947);transform-origin:0 50%;">画宙</span>
<div style="left:983px;top:436.5px;width:169px;height:19px;background:#d9d9d9"></div>
<div style="left:1040px;top:437.5px;width:112px;height:17px;background:linear-gradient(#c6c6c6,#b3b3b3);border-top:1px solid #cfcfcf"></div>
<svg style="left:989px;top:439.5px" width="13" height="14" viewBox="0 0 13 14"><rect x="0" y="2" width="12" height="11" fill="#2a86d8"/><path d="M2 11 V5 H5 M7 11 L9 4 L11 11 M8 8 H10" stroke="#f4f8ff" stroke-width="1.4" fill="none"/></svg>
<span style="left:1004px;top:438.2px;height:15.5px;line-height:15.5px;font-size:11.5px;color:#1b1b1b;font-weight:700;transform:scaleX(0.870);transform-origin:0 50%;">譶舞蓑</span>
<svg style="left:1131px;top:439.5px" width="15" height="14" viewBox="0 0 15 14"><path d="M1.5 1 V13 M12.5 1 V13 M1.5 5.5 H12.5 M1.5 8.5 H12.5" stroke="#5a5a5a" stroke-width="1.5" fill="none"/><rect x="2.5" y="6" width="9" height="2" fill="#e8e8e8"/></svg>
<svg style="left:990px;top:461px" width="16" height="14" viewBox="0 0 16 14"><rect x="0" y="1" width="8" height="12" rx="1.5" fill="#1e8ae8"/><rect x="7" y="2" width="8.5" height="11" rx="1.5" fill="#2ab84a"/></svg>
<div style="left:1013px;top:458px;width:108px;height:19.5px;background:#fff;border:1px solid #bdbdbd"></div>
<span style="left:1018px;top:460.2px;height:15.5px;line-height:15.5px;font-size:11.5px;color:#1b1b1b;font-weight:500;transform:scaleX(0.841);transform-origin:0 50%;">穿旄石</span>
<div style="left:1120px;top:458px;width:24.5px;height:19.5px;background:linear-gradient(#3f9af6,#2080ea);border:1px solid #1c6fd0"></div>
<svg style="left:1125px;top:462px" width="15" height="12" viewBox="0 0 15 12"><path d="M2 6 H12 M5 2 V10 M8 2 V10 M11 3 V9" stroke="#eef6ff" stroke-width="1.5"/></svg>
<div style="left:988px;top:480px;width:153px;height:100px;background:#a6a6a6;border:1px solid #8e8e8e"></div>
<div style="left:989px;top:481px;width:20px;height:18.5px;background:#fff;border:1px solid #6a6a6a"></div>
<span style="left:1015px;top:483.0px;height:15px;line-height:15px;font-size:11px;color:#242424;font-weight:500;transform:scaleX(0.864);transform-origin:0 50%;">弃黧</span>
<div style="left:989px;top:500px;width:151px;height:1px;background:#8f8f8f"></div>
<div style="left:989px;top:501px;width:20px;height:18.5px;background:#fff;border:1px solid #6a6a6a"></div>
<span style="left:1015px;top:503.0px;height:15px;line-height:15px;font-size:11px;color:#242424;font-weight:500;transform:scaleX(0.788);transform-origin:0 50%;">寻锌密</span>
<div style="left:989px;top:520px;width:151px;height:1px;background:#8f8f8f"></div>
<div style="left:989px;top:521px;width:20px;height:18.5px;background:#fff;border:1px solid #6a6a6a"></div>
<span style="left:1015px;top:523.0px;height:15px;line-height:15px;font-size:11px;color:#242424;font-weight:500;transform:scaleX(0.818);transform-origin:0 50%;">才惹画</span>
<div style="left:989px;top:540px;width:151px;height:1px;background:#8f8f8f"></div>
<div style="left:989px;top:541px;width:20px;height:18.5px;background:#fff;border:1px solid #6a6a6a"></div>
<span style="left:1015px;top:543.0px;height:15px;line-height:15px;font-size:11px;color:#242424;font-weight:500;transform:scaleX(0.864);transform-origin:0 50%;">翁薩</span>
<div style="left:989px;top:560px;width:151px;height:1px;background:#8f8f8f"></div>
<div style="left:989px;top:561px;width:20px;height:18.5px;background:#fff;border:1px solid #6a6a6a"></div>
<span style="left:1015px;top:563.0px;height:15px;line-height:15px;font-size:11px;color:#242424;font-weight:500;transform:scaleX(0.864);transform-origin:0 50%;">涔匡</span>
<div style="left:983px;top:587px;width:169px;height:25px;background:#dcdcdc;border-top:1px solid #c6c6c6"></div>
<svg style="left:995px;top:593px" width="14" height="13" viewBox="0 0 14 13"><rect x="1" y="1" width="11" height="11" fill="#fafafa" stroke="#b01818" stroke-width="1.4"/><rect x="6" y="4" width="6" height="8" fill="#e81e1e"/></svg>
<svg style="left:1014px;top:591px" width="22" height="16" viewBox="0 0 22 16"><path d="M2 4 H12 L9 8 M8 7 L10 12 H14" stroke="#555" stroke-width="1.4" fill="none" stroke-linecap="round"/></svg>
<svg style="left:1039px;top:591px" width="22" height="16" viewBox="0 0 22 16"><path d="M5 3 L3 13 M5 3 Q9 5 13 4 M4 9 H12 V12" stroke="#555" stroke-width="1.4" fill="none" stroke-linecap="round"/></svg>
<svg style="left:1066px;top:591px" width="22" height="16" viewBox="0 0 22 16"><path d="M3 4 H13 Q14 8 12 12 H3 M4 8 H12 M4 10 H11" stroke="#555" stroke-width="1.4" fill="none" stroke-linecap="round"/></svg>
<svg style="left:1091px;top:591px" width="22" height="16" viewBox="0 0 22 16"><path d="M2 8.5 H18 M10 2 L11 15" stroke="#555" stroke-width="1.4" fill="none" stroke-linecap="round"/></svg>
<svg style="left:1118px;top:591px" width="22" height="16" viewBox="0 0 22 16"><path d="M3 3 Q10 5 17 8 M17 8 Q9 9 3 11" stroke="#555" stroke-width="1.4" fill="none" stroke-linecap="round"/></svg>
<div style="left:983px;top:611px;width:169px;height:1px;background:#a9a9a9"></div>
</body></html>
